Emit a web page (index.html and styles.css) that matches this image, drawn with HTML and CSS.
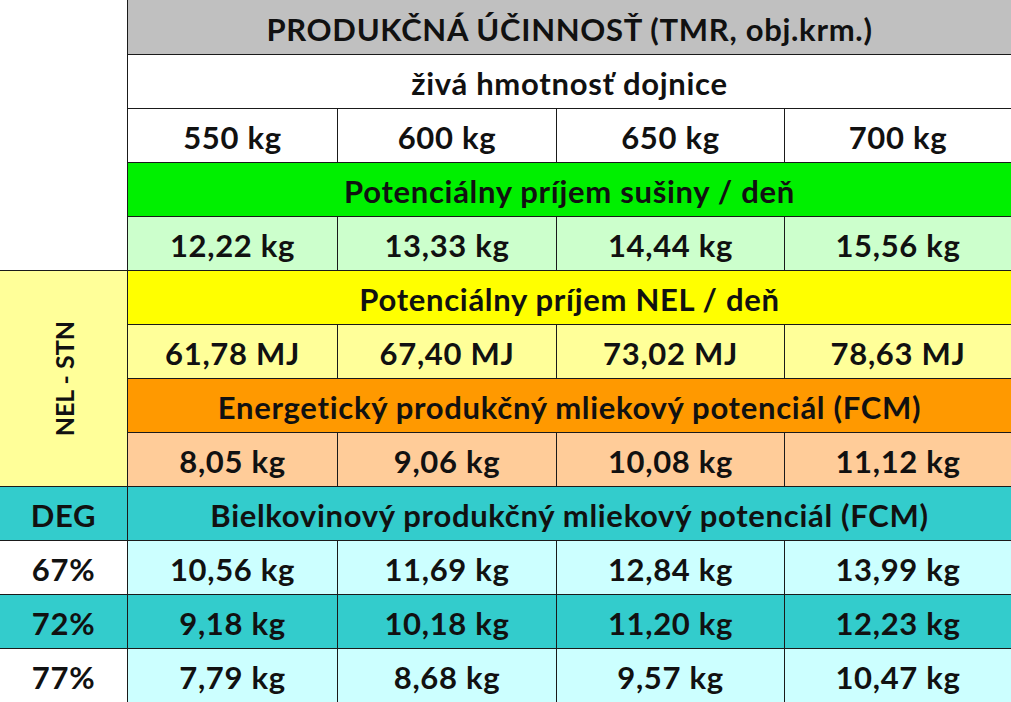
FILE: index.html
```html
<!DOCTYPE html>
<html lang="sk">
<head>
<meta charset="utf-8">
<title>Produkčná účinnosť</title>
<link rel="stylesheet" href="styles.css">
</head>
<body>
<div class="sheet">
  <div class="c blank"></div>
  <div class="c span4 gray">PRODUKČNÁ ÚČINNOSŤ (TMR, obj.krm.)</div>
  <div class="c span4 white">živá hmotnosť dojnice</div>
  <div class="c white">550 kg</div>
  <div class="c white">600 kg</div>
  <div class="c white">650 kg</div>
  <div class="c white">700 kg</div>
  <div class="c span4 green">Potenciálny príjem sušiny / deň</div>
  <div class="c lgreen">12,22 kg</div>
  <div class="c lgreen">13,33 kg</div>
  <div class="c lgreen">14,44 kg</div>
  <div class="c lgreen">15,56 kg</div>

  <div class="c side lyellow"><span class="vert">NEL - STN</span></div>
  <div class="c span4 yellow">Potenciálny príjem NEL / deň</div>
  <div class="c lyellow">61,78 MJ</div>
  <div class="c lyellow">67,40 MJ</div>
  <div class="c lyellow">73,02 MJ</div>
  <div class="c lyellow">78,63 MJ</div>
  <div class="c span4 orange">Energetický produkčný mliekový potenciál (FCM)</div>
  <div class="c lorange">8,05 kg</div>
  <div class="c lorange">9,06 kg</div>
  <div class="c lorange">10,08 kg</div>
  <div class="c lorange">11,12 kg</div>

  <div class="c teal">DEG</div>
  <div class="c span4 teal">Bielkovinový produkčný mliekový potenciál (FCM)</div>
  <div class="c white">67%</div>
  <div class="c lcyan">10,56 kg</div>
  <div class="c lcyan">11,69 kg</div>
  <div class="c lcyan">12,84 kg</div>
  <div class="c lcyan">13,99 kg</div>
  <div class="c teal">72%</div>
  <div class="c teal">9,18 kg</div>
  <div class="c teal">10,18 kg</div>
  <div class="c teal">11,20 kg</div>
  <div class="c teal">12,23 kg</div>
  <div class="c white">77%</div>
  <div class="c lcyan">7,79 kg</div>
  <div class="c lcyan">8,68 kg</div>
  <div class="c lcyan">9,57 kg</div>
  <div class="c lcyan">10,47 kg</div>
</div>
</body>
</html>
```
FILE: styles.css
```css
html, body {
  margin: 0;
  padding: 0;
  background: #ffffff;
}
.sheet {
  width: 1011px;
  height: 702px;
  display: grid;
  grid-template-columns: 127px 209px 218px 227px 226px;
  grid-template-rows: 54px repeat(12, 53px);
  gap: 1px;
  background: #1a1a1a;
  font-family: "Lato", "Liberation Sans", sans-serif;
  font-weight: 700;
  font-size: 31px;
  letter-spacing: 0.7px;
  color: #111111;
  overflow: hidden;
}
.c {
  display: flex;
  align-items: center;
  justify-content: center;
  padding-top: 3px;
  box-sizing: border-box;
  white-space: nowrap;
}
.blank {
  grid-row: 1 / span 5;
  background: #ffffff;
}
.side {
  grid-row: 6 / span 4;
  padding-top: 0;
}
.vert {
  writing-mode: vertical-rl;
  transform: rotate(180deg);
  font-size: 25px;
  letter-spacing: 0;
}
.span4 { grid-column: 2 / span 4; }
.gray { background: #c0c0c0; }
.white { background: #ffffff; }
.green { background: #00f000; }
.lgreen { background: #ccffcc; }
.yellow { background: #ffff00; }
.lyellow { background: #ffff99; }
.orange { background: #ff9900; }
.lorange { background: #ffcc99; }
.teal { background: #33cccc; }
.lcyan { background: #ccffff; }
```
